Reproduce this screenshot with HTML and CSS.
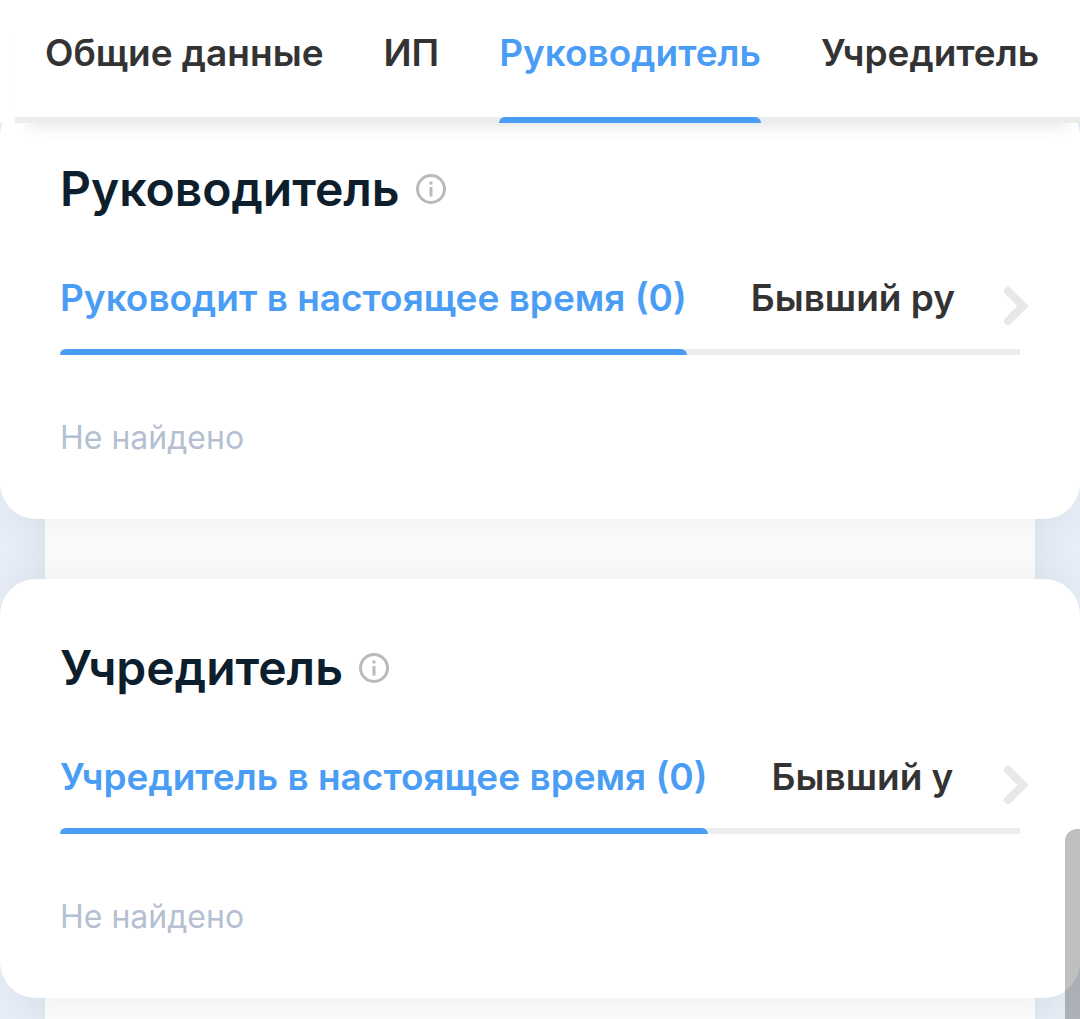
FILE: index.html
```html
<!DOCTYPE html>
<html lang="ru">
<head>
<meta charset="utf-8">
<meta name="viewport" content="width=device-width, initial-scale=1">
<title>Руководитель</title>
<link rel="stylesheet" href="styles.css">
</head>
<body>
<header class="topbar">
  <nav class="topnav">
    <a class="tab" href="#general">Общие данные</a>
    <a class="tab" href="#ip">ИП</a>
    <a class="tab tab-active" href="#head">Руководитель</a>
    <a class="tab" href="#founder">Учредитель</a>
  </nav>
</header>
<main class="page">
  <section class="card" id="head">
    <div class="card-head">
      <h2 class="title">Руководитель</h2>
      <button class="info" type="button" aria-label="Справка">
        <svg viewBox="0 0 30 30" width="30" height="30"><circle cx="15" cy="15" r="13.5" fill="none" stroke="#bababa" stroke-width="3"/><path d="M13.500 7.500h3v3h-3zM13.500 13h3v9.500h-3z" fill="#bababa"/></svg>
      </button>
    </div>
    <div class="subtabs">
      <button class="tab tab-active" type="button">Руководит в настоящее время (0)</button>
      <button class="tab" type="button">Бывший ру</button>
      <button class="next" type="button" aria-label="Далее">
        <svg viewBox="0 0 26 40" width="26" height="40"><path d="M5 5L20 20L5 35" fill="none" stroke="#e8e8e8" stroke-width="8" stroke-linecap="round"/></svg>
      </button>
    </div>
    <p class="empty">Не найдено</p>
  </section>
  <section class="card" id="founder">
    <div class="card-head">
      <h2 class="title">Учредитель</h2>
      <button class="info" type="button" aria-label="Справка">
        <svg viewBox="0 0 30 30" width="30" height="30"><circle cx="15" cy="15" r="13.5" fill="none" stroke="#bababa" stroke-width="3"/><path d="M13.500 7.500h3v3h-3zM13.500 13h3v9.500h-3z" fill="#bababa"/></svg>
      </button>
    </div>
    <div class="subtabs">
      <button class="tab tab-active" type="button">Учредитель в настоящее время (0)</button>
      <button class="tab" type="button">Бывший у</button>
      <button class="next" type="button" aria-label="Далее">
        <svg viewBox="0 0 26 40" width="26" height="40"><path d="M5 5L20 20L5 35" fill="none" stroke="#e8e8e8" stroke-width="8" stroke-linecap="round"/></svg>
      </button>
    </div>
    <p class="empty">Не найдено</p>
  </section>
</main>
<div class="scroll-thumb"></div>
</body>
</html>
```
FILE: styles.css
```css
* {
  box-sizing: border-box;
}

body {
  margin: 0;
  min-height: 100vh;
  display: flex;
  flex-direction: column;
  overflow: hidden;
  background: #e8eef7;
  color: #333;
  font-family: Inter, "Noto Sans", sans-serif;
}

button {
  margin: 0;
  padding: 0;
  border: 0;
  background: none;
  font: inherit;
  color: inherit;
}

svg {
  display: block;
}

.topbar {
  position: relative;
  z-index: 2;
  padding-left: 15px;
  background: #fff;
}

.topnav {
  display: flex;
  gap: 60px;
  padding: 23px 0 0 30px;
  box-shadow: inset 0 -6px #ededed, 0 16px 16px -14px rgba(0, 0, 0, 0.12);
}

.tab {
  display: flex;
  flex: none;
  flex-direction: column;
  gap: 34px;
  color: #333;
  font-size: 37px;
  font-weight: 600;
  line-height: 60px;
  text-decoration: none;
  white-space: nowrap;
}

.tab::after {
  content: "";
  height: 6px;
  border-radius: 6px 6px 0 0;
}

.tab-active {
  color: #4a9df5;
}

.tab-active::after {
  background: #4a9df5;
}

.page {
  flex: 1;
  display: flex;
  flex-direction: column;
  gap: 60px;
  margin: -23px 45px 0;
  padding-bottom: 24px;
  background: #fbfcfb;
  box-shadow: 0 0 40px rgba(60, 90, 90, 0.09);
}

.card {
  margin: 0 -45px;
  padding: 60px 60px 54px;
  border-radius: 36px;
  background: #fff;
  box-shadow: 0 0 44px rgba(60, 80, 100, 0.07);
}

.card-head {
  display: flex;
  align-items: center;
  gap: 16px;
}

.title {
  margin: 0;
  color: #0d1e2d;
  font-size: 48px;
  font-weight: 600;
  line-height: 58px;
}

.subtabs {
  display: flex;
  margin-top: 50px;
  box-shadow: inset 0 -6px #ededed;
}

.subtabs .tab {
  gap: 21px;
}

.subtabs .tab-active {
  margin-right: 64px;
}

.next {
  align-self: center;
  margin: 0 -9px 0 auto;
  padding-bottom: 12px;
}

.empty {
  margin: 56px 0 0;
  color: #b5bfd2;
  font-size: 32px;
  line-height: 54px;
}

.scroll-thumb {
  position: fixed;
  z-index: 3;
  right: 0;
  bottom: 0;
  width: 15px;
  height: 190px;
  border-radius: 12px 0 0 0;
  background: rgba(0, 0, 0, 0.25);
}
```
